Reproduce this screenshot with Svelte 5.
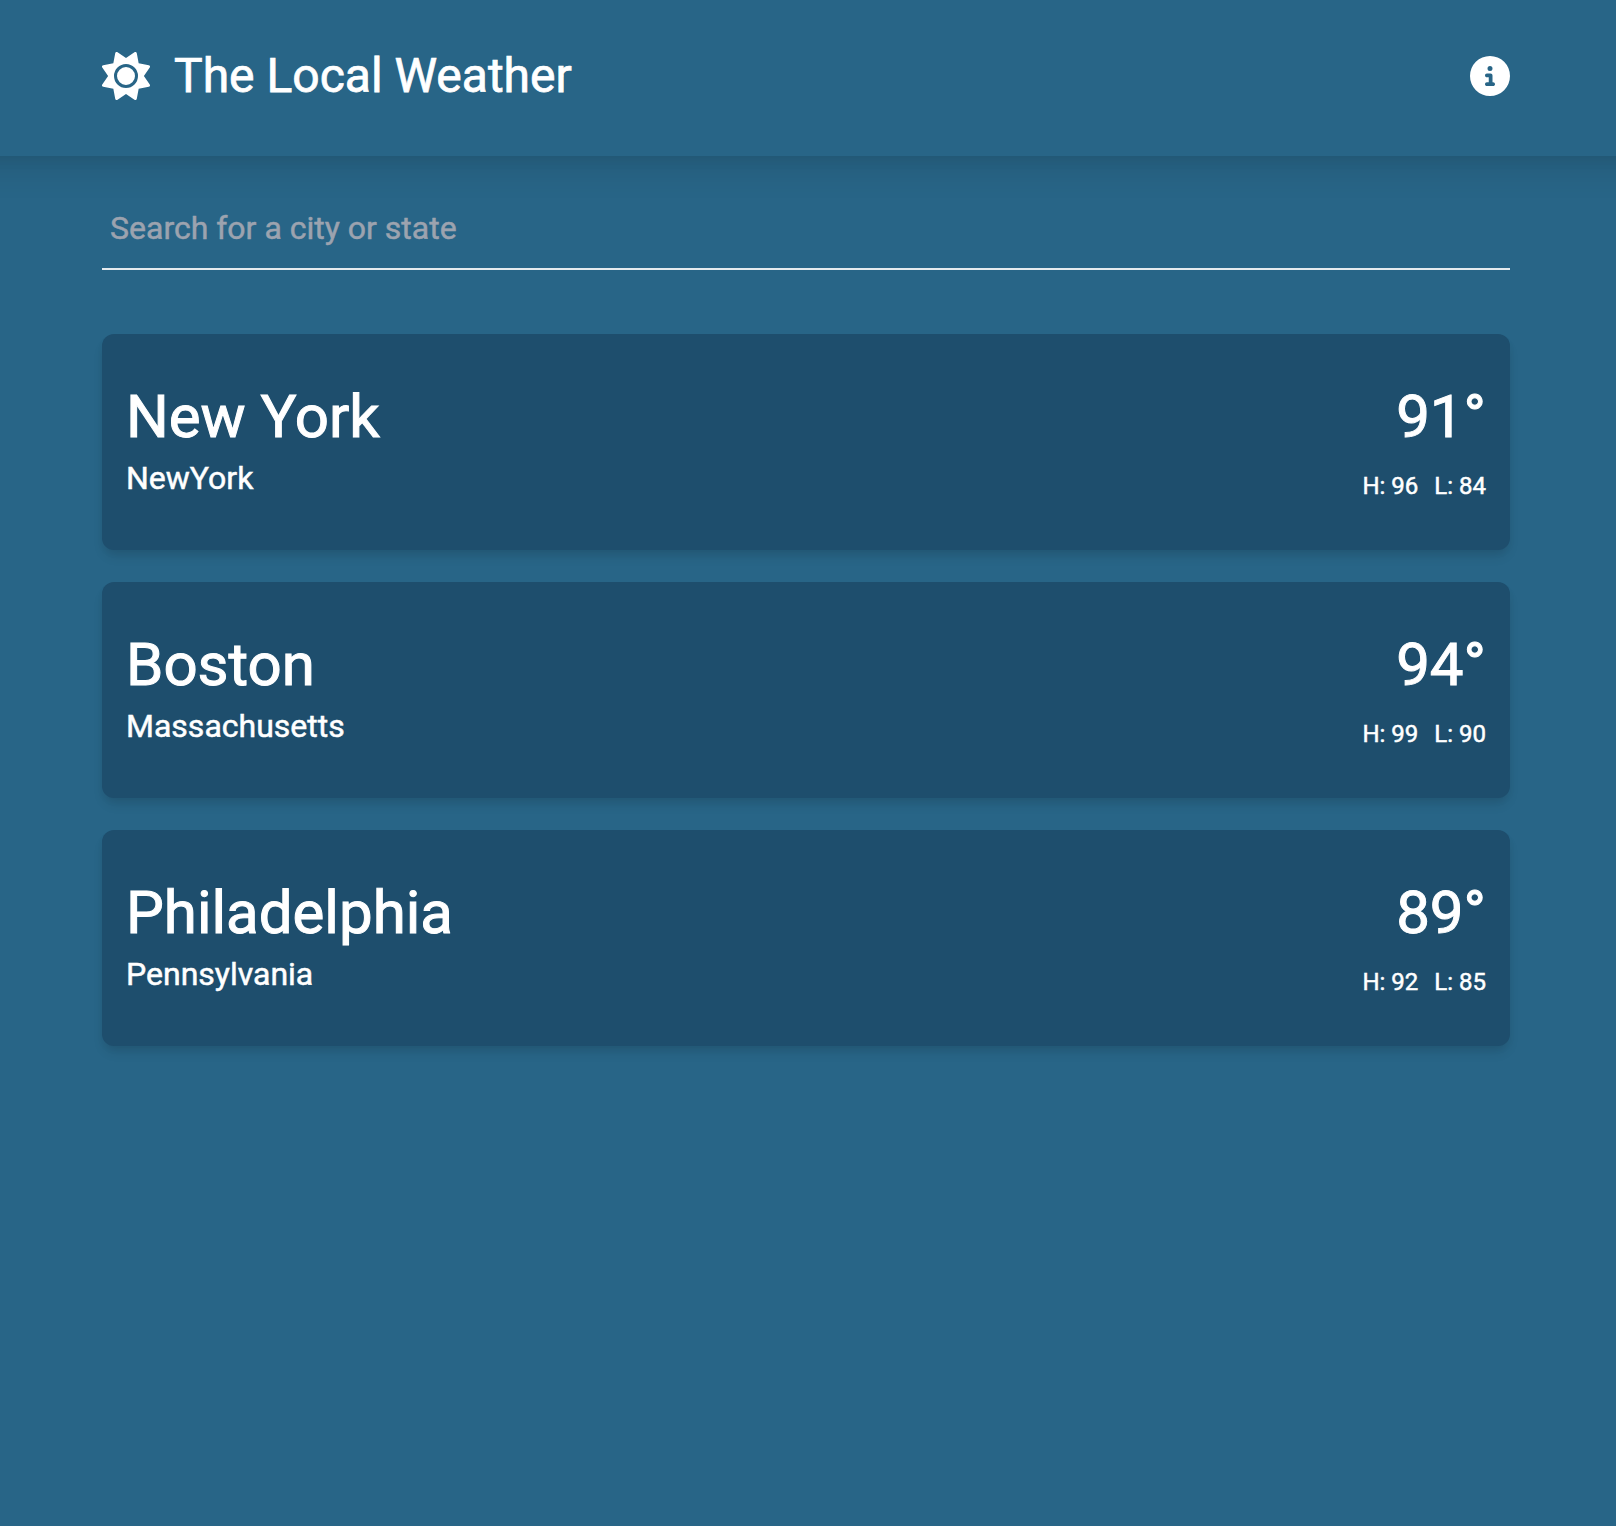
<script>
  const cities = [
    { city: 'New York', state: 'NewYork', temp: 91, high: 96, low: 84 },
    { city: 'Boston', state: 'Massachusetts', temp: 94, high: 99, low: 90 },
    { city: 'Philadelphia', state: 'Pennsylvania', temp: 89, high: 92, low: 85 },
  ];
</script>

<div class="app">
  <header>
    <div class="brand">
      <svg class="sun" viewBox="0 0 512 512" fill="currentColor" aria-hidden="true">
        <path d="M361.5 1.2c5 2.1 8.6 6.6 9.6 11.9L391 121l107.9 19.8c5.3 1 9.8 4.6 11.9 9.6s1.5 10.7-1.6 15.2L446.9 256l62.3 90.3c3.1 4.5 3.7 10.2 1.6 15.2s-6.6 8.6-11.9 9.6L391 391 371.1 498.9c-1 5.3-4.6 9.8-9.6 11.9s-10.7 1.5-15.2-1.6L256 446.9l-90.3 62.3c-4.5 3.1-10.2 3.7-15.2 1.6s-8.6-6.6-9.6-11.9L121 391 13.1 371.1c-5.3-1-9.8-4.6-11.9-9.6s-1.5-10.7 1.6-15.2L65.1 256 2.8 165.7c-3.1-4.5-3.7-10.2-1.6-15.2s6.6-8.6 11.9-9.6L121 121 140.9 13.1c1-5.3 4.6-9.8 9.6-11.9s10.7-1.5 15.2 1.6L256 65.1 346.3 2.8c4.5-3.1 10.2-3.7 15.2-1.6zM160 256a96 96 0 1 1 192 0 96 96 0 1 1 -192 0zm224 0a128 128 0 1 0 -256 0 128 128 0 1 0 256 0z" />
      </svg>
      <p>The Local Weather</p>
    </div>
    <svg class="info" viewBox="0 0 512 512" fill="currentColor" aria-hidden="true">
      <path d="M256 512A256 256 0 1 0 256 0a256 256 0 1 0 0 512zM216 336h24V272H216c-13.3 0-24-10.7-24-24s10.7-24 24-24h48c13.3 0 24 10.7 24 24v88h8c13.3 0 24 10.7 24 24s-10.7 24-24 24H216c-13.3 0-24-10.7-24-24s10.7-24 24-24zm40-208a32 32 0 1 1 0 64 32 32 0 1 1 0-64z" />
    </svg>
  </header>

  <main>
    <input type="text" placeholder="Search for a city or state" />
    <div class="list">
      {#each cities as c}
        <article>
          <div class="place">
            <h2>{c.city}</h2>
            <h3>{c.state}</h3>
          </div>
          <div class="weather">
            <p class="temp">{c.temp}°</p>
            <div class="range">
              <span>H: {c.high}</span>
              <span>L: {c.low}</span>
            </div>
          </div>
        </article>
      {/each}
    </div>
  </main>
</div>

<style>
  :global(body) {
    margin: 0;
    background: #286587;
  }

  .app {
    min-height: 100vh;
    overflow-x: clip;
    background: #286587;
    color: #fff;
    font-family: Roboto, sans-serif;
    -webkit-text-stroke: 0.5px currentColor;
  }

  h2, h3, p {
    margin: 0;
    font-weight: 400;
  }

  /* Bleeds past both sides so the shadow stays even up to the window edge */
  header {
    box-sizing: border-box;
    height: 156px;
    margin: 0 -60px;
    padding: 48px 166px 52px 162px;
    display: flex;
    align-items: center;
    justify-content: space-between;
    box-shadow: 0 20px 30px -6px rgba(0, 0, 0, 0.1), 0 8px 12px -4px rgba(0, 0, 0, 0.05);
  }

  .brand {
    display: flex;
    align-items: center;
    gap: 24px;
  }

  .sun {
    width: 48px;
    height: 48px;
  }

  .brand p {
    font-size: 48px;
    line-height: 56px;
    -webkit-text-stroke-width: 0.75px;
  }

  .info {
    width: 40px;
    height: 40px;
  }

  main {
    padding: 32px 106px 0 102px;
  }

  input {
    display: block;
    box-sizing: border-box;
    width: 100%;
    height: 82px;
    padding: 0 8px;
    border: 0;
    border-bottom: 2px solid #e5eaee;
    outline: 0;
    background: transparent;
    color: #fff;
    font: 400 32px/48px Roboto, sans-serif;
  }

  input::placeholder {
    color: #9ca3af;
    opacity: 1;
  }

  .list {
    display: flex;
    flex-direction: column;
    gap: 32px;
    margin-top: 64px;
  }

  article {
    box-sizing: border-box;
    height: 216px;
    padding: 48px 24px;
    display: flex;
    justify-content: space-between;
    border-radius: 12px;
    background: #1e4e6d;
    box-shadow: 0 8px 12px -2px rgba(0, 0, 0, 0.1), 0 4px 8px -2px rgba(0, 0, 0, 0.06);
  }

  .place, .weather {
    display: flex;
    flex-direction: column;
  }

  .place {
    gap: 2px;
  }

  .weather {
    align-items: flex-end;
    gap: 18px;
  }

  h2, .temp {
    font-size: 60px;
    line-height: 70px;
    -webkit-text-stroke-width: 1px;
  }

  h3 {
    font-size: 32px;
    line-height: 48px;
  }

  .range {
    display: flex;
    gap: 16px;
    font-size: 24px;
    line-height: 32px;
  }
</style>
